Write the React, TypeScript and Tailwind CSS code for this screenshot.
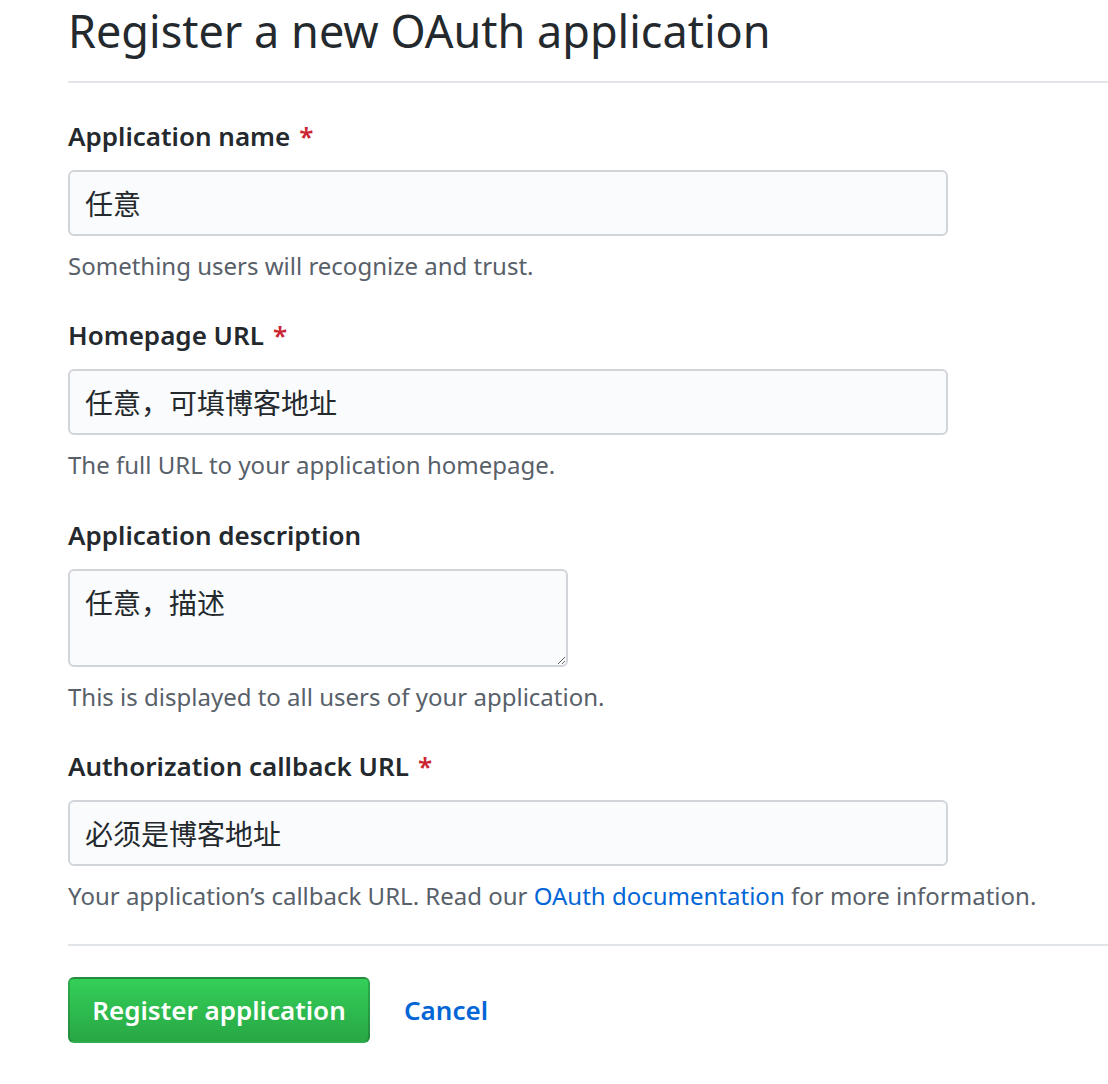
import React from "react";

const font = { fontFamily: '"Noto Sans", "Noto Sans CJK SC", sans-serif' };

interface FieldProps {
  label: string;
  required?: boolean;
  value: string;
  help: React.ReactNode;
  multiline?: boolean;
  gap?: string;
}

function Field({ label, required, value, help, multiline, gap = "mb-[31px]" }: FieldProps) {
  return (
    <div className={gap}>
      <label className="flex h-[40px] items-center text-[26px] font-semibold leading-[40px] text-[#24292e]">
        {label}
        {required && <span className="ml-[9px] text-[#cb2431]">*</span>}
      </label>
      <div className="mt-[14px]">
        {multiline ? (
          <textarea
            defaultValue={value}
            className="block h-[98px] w-[500px] rounded-[6px] border-2 border-[#d1d5da] bg-[#fafbfc] px-[15px] py-[12px] text-[28px] leading-[40px] text-[#24292e] outline-none"
            style={font}
          />
        ) : (
          <input
            defaultValue={value}
            className="block h-[66px] w-[880px] rounded-[6px] border-2 border-[#d1d5da] bg-[#fafbfc] px-[15px] text-[28px] text-[#24292e] outline-none"
            style={font}
          />
        )}
      </div>
      <p className="mt-[12px] h-[36px] text-[24px] leading-[36px] text-[#586069]">{help}</p>
    </div>
  );
}

export default function App() {
  return (
    <div className="min-h-[1084px] overflow-hidden bg-white pl-[68px]" style={font}>
      <h2 className="h-[81px] text-[45px] font-normal leading-[62px] text-[#24292e]">
        Register a new OAuth application
      </h2>
      <div className="h-[2px] bg-[#e1e4e8]" />

      <div className="pt-[33px]">
        <Field
          label="Application name"
          required
          value="任意"
          help="Something users will recognize and trust."
          gap="mb-[31px]"
        />
        <Field
          label="Homepage URL"
          required
          value="任意，可填博客地址"
          help="The full URL to your application homepage."
          gap="mb-[32px]"
        />
        <Field
          label="Application description"
          value="任意，描述"
          multiline
          help="This is displayed to all users of your application."
        />
        <Field
          label="Authorization callback URL"
          required
          value="必须是博客地址"
          gap="mb-[30px]"
          help={
            <>
              Your application’s callback URL. Read our{" "}
              <a href="#" className="text-[#0366d6]">
                OAuth documentation
              </a>{" "}
              for more information.
            </>
          }
        />
      </div>

      <div className="h-[2px] bg-[#e1e4e8]" />

      <div className="mt-[31px] flex items-center gap-[34px]">
        <button
          className="h-[66px] w-[302px] rounded-[6px] border-2 border-[rgba(27,31,35,0.2)] bg-gradient-to-b from-[#34d058] to-[#28a745] text-[26px] font-semibold text-white"
          style={font}
        >
          Register application
        </button>
        <a href="#" className="text-[26px] font-semibold text-[#0366d6]">
          Cancel
        </a>
      </div>
    </div>
  );
}
